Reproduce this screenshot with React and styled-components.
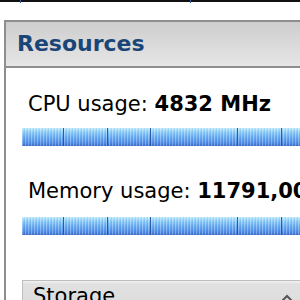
import React from "react";
import styled, { createGlobalStyle } from "styled-components";

const GlobalStyle = createGlobalStyle`
  html, body { margin: 0; padding: 0; background: #ffffff; overflow: hidden; }
  body { font-family: "DejaVu Sans", Verdana, sans-serif; }
`;

const Page = styled.div`
  width: 300px;
  height: 300px;
  overflow: hidden;
  background: #fff;
`;

const TopBar = styled.div`
  height: 2px;
  background: #111;
  display: flex;
`;

const TopMark = styled.span`
  width: 1px;
  height: 3px;
  background: #3b5f9a;
  margin-left: ${(p) => p.$offset}px;
`;

const Wrap = styled.div`
  padding: 18px 0 0 4px;
`;

const Panel = styled.section`
  width: 340px;
  border-left: 2px solid #8e8e8e;
  border-top: 2px solid #8e8e8e;
  background: #fff;
`;

const Header = styled.header`
  height: 44px;
  display: flex;
  align-items: center;
  padding-left: 11px;
  background: linear-gradient(#cdcdcd, #e6e6e6);
  border-bottom: 2px solid #8e8e8e;
`;

const Title = styled.h2`
  margin: 0;
  font-family: "DejaVu Sans", Verdana, sans-serif;
  font-weight: bold;
  font-size: 22px;
  line-height: 44px;
  color: #1a4677;
`;

const Body = styled.div`
  padding: 24px 0 0 16px;
  display: flex;
  flex-direction: column;
`;

const Metric = styled.div`
  display: flex;
  flex-direction: column;
  margin-bottom: ${(p) => p.$after}px;
`;

const Label = styled.div`
  padding-left: 6px;
  font-size: 21px;
  line-height: 24px;
  color: #000;
  white-space: nowrap;
`;

const Value = styled.b`
  font-weight: bold;
`;

const Bar = styled.div`
  margin-top: ${(p) => p.$top}px;
  height: 18px;
  background:
    repeating-linear-gradient(90deg, transparent 0 41px, rgba(35, 80, 160, 0.9) 41px 42px, transparent 42px 43.5px),
    repeating-linear-gradient(90deg, rgba(255, 255, 255, 0.28) 0 1px, transparent 1px 2px, rgba(20, 60, 160, 0.08) 2px 3px),
    linear-gradient(#c2ecfd 0, #a4dcfb 2px, #86c6f7 5px, #6aaef2 9px, #5898ea 13px, #4a84e0 16px, #3b69c0 18px);
`;

const StorageBox = styled.div`
  border-top: 1px solid #bdbdbd;
  border-left: 1px solid #bdbdbd;
  background: linear-gradient(#f2f2f2 0, #e1e1e1 3px, #d9d9d9 100%);
  height: 40px;
  display: flex;
  align-items: flex-start;
  justify-content: space-between;
  padding: 3px 53px 0 10px;
`;

const StorageTitle = styled.span`
  font-size: 21px;
  line-height: 24px;
  color: #000;
`;

const Chevron = styled.svg`
  margin-top: 9px;
  width: 12px;
  height: 10px;
`;

const metrics = [
  { label: "CPU usage:", value: "4832 MHz", gap: 12, after: 33 },
  { label: "Memory usage:", value: "11791,00 MB", gap: 14, after: 45 },
];

export default function App() {
  return (
    <Page>
      <GlobalStyle />
      <TopBar>
        <TopMark $offset={20} />
        <TopMark $offset={169} />
      </TopBar>
      <Wrap>
        <Panel>
          <Header>
            <Title>Resources</Title>
          </Header>
          <Body>
            {metrics.map((m) => (
              <Metric key={m.label} $after={m.after}>
                <Label>
                  {m.label} <Value>{m.value}</Value>
                </Label>
                <Bar $top={m.gap} />
              </Metric>
            ))}
            <StorageBox>
              <StorageTitle>Storage</StorageTitle>
              <Chevron viewBox="0 0 12 10">
                <path d="M1 8 L6 3 L11 8" fill="none" stroke="#555" strokeWidth="2" />
              </Chevron>
            </StorageBox>
          </Body>
        </Panel>
      </Wrap>
    </Page>
  );
}
